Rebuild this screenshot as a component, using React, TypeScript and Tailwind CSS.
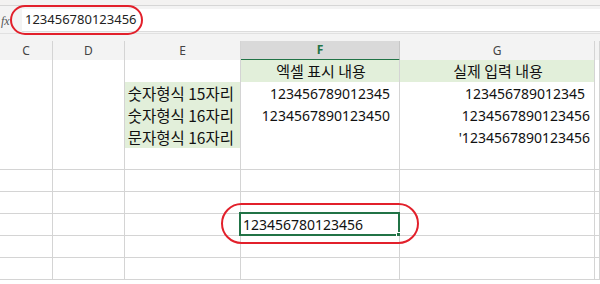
import React from 'react';

const font = { fontFamily: '"Noto Sans", "Noto Sans CJK KR", sans-serif' };
const krFont = { fontFamily: '"Noto Sans CJK KR", "Noto Sans", sans-serif' };

const cols = ['C', 'D', 'E', 'F', 'G', ''];

type Cell = { text?: string; green?: boolean; align?: 'left' | 'right' | 'center'; pr?: string; kr?: string };

const rows: Cell[][] = [
  [{}, {}, {}, { text: '엑셀 표시 내용', green: true, align: 'center', kr: 'text-[15px]' }, { text: '실제 입력 내용', green: true, align: 'center', kr: 'text-[15px]' }, {}],
  [{}, {}, { text: '숫자형식 15자리', green: true, align: 'right', kr: 'text-[15.5px]', pr: 'pr-[6px]' }, { text: '123456789012345', align: 'right', pr: 'pr-[9px]' }, { text: '123456789012345', align: 'right', pr: 'pr-[9px]' }, {}],
  [{}, {}, { text: '숫자형식 16자리', green: true, align: 'right', kr: 'text-[15.5px]', pr: 'pr-[6px]' }, { text: '1234567890123450', align: 'right', pr: 'pr-[9px]' }, { text: '1234567890123456', align: 'right', pr: 'pr-[4px]' }, {}],
  [{}, {}, { text: '문자형식 16자리', green: true, align: 'right', kr: 'text-[15.5px]', pr: 'pr-[6px]' }, {}, { text: "'1234567890123456", align: 'right', pr: 'pr-[4px]' }, {}],
  [{}, {}, {}, {}, {}, {}],
  [{}, {}, {}, {}, {}, {}],
  [{}, {}, {}, {}, {}, {}],
  [{}, {}, {}, { text: '123456780123456', align: 'left' }, {}, {}],
  [{}, {}, {}, {}, {}, {}],
  [{}, {}, {}, {}, {}, {}],
];

const gridCols = 'grid grid-cols-[53px_72px_116px_159px_195px_1fr]';

export default function App() {
  return (
    <div className="relative w-[600px] h-[284px] overflow-hidden bg-white" style={font}>
      {/* ribbon edge */}
      <div className="h-[6px] bg-[#f3f2f1] border-b border-[#d6d6d6]" />

      {/* formula bar */}
      <div className="bg-[#f3f3f3] h-[28px] flex items-start pt-[3px] border-b border-[#e1e1e1]">
        <div className="w-[22px] h-[23px] flex items-center pl-[1px] text-[12px] italic text-[#555]" style={{ fontFamily: '"Liberation Serif", serif' }}>
          fx
        </div>
        <div className="flex-1 h-[23px] bg-white flex items-center pl-[3px] text-[13px] text-[#222] border-b border-[#dcdcdc]">
          123456780123456
        </div>
      </div>

      <div className="h-[7px] bg-[#f3f3f3]" />

      {/* column headers */}
      <div className={`${gridCols} h-[19px] bg-[#f3f3f3]`}>
        {cols.map((c, i) =>
          c === 'F' ? (
            <div key={i} className="bg-[#d9d9d9] border-r border-[#c6c6c6] border-b-2 border-b-[#217346] flex items-center justify-center text-[12px] font-bold text-[#217346]">
              {c}
            </div>
          ) : (
            <div key={i} className="border-r border-[#d4d4d4] border-b border-b-[#d4d4d4] flex items-center justify-center text-[12px] text-[#444]">
              {c}
            </div>
          ),
        )}
      </div>

      {/* cells */}
      {rows.map((row, r) => (
        <div key={r} className={`${gridCols} h-[22px]`}>
          {row.map((cell, c) => {
            const selected = r === 7 && c === 3;
            const align =
              cell.align === 'right' ? 'justify-end' : cell.align === 'center' ? 'justify-center' : 'justify-start';
            return (
              <div
                key={c}
                className={`relative flex items-center whitespace-nowrap text-[#111] border-r border-b border-[#d4d4d4] ${align} ${
                  cell.green ? 'bg-[#e2efda]' : 'bg-white'
                } ${cell.kr ?? 'text-[14px]'} ${cell.pr ?? (cell.align === 'right' ? 'pr-[7px]' : 'pl-[2px]')}`}
                style={cell.kr ? krFont : undefined}
              >
                {cell.text}
                {selected && (
                  <div className="absolute -left-[2px] -top-[2px] -right-[1px] -bottom-[1px] border-2 border-[#217346]">
                    <div className="absolute -right-[4px] -bottom-[4px] w-[6px] h-[6px] bg-[#217346] border border-white" />
                  </div>
                )}
              </div>
            );
          })}
        </div>
      ))}

      {/* red callouts */}
      <div className="absolute left-[10px] top-[5px] w-[133px] h-[30px] rounded-full border-2 border-[#e2202b]" />
      <div className="absolute left-[221px] top-[203px] w-[198px] h-[41px] rounded-full border-2 border-[#e2202b]" />
    </div>
  );
}
